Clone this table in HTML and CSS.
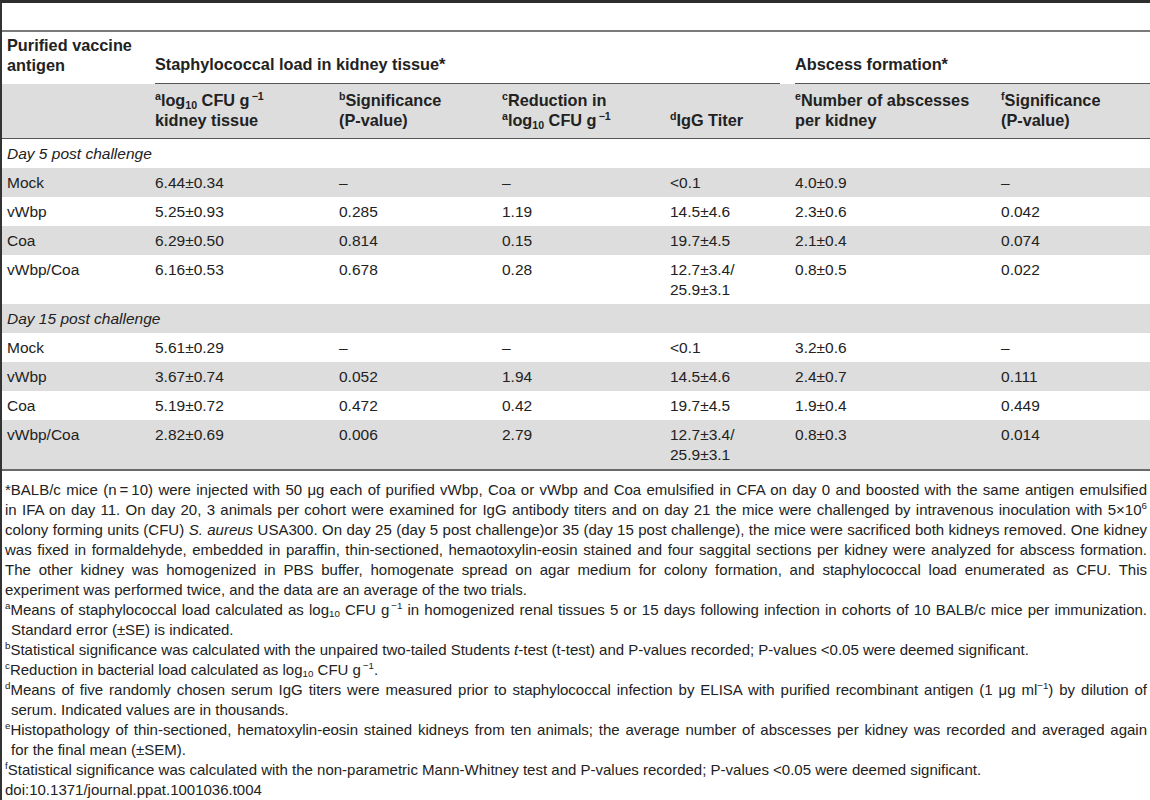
FILE: index.html
```html
<!DOCTYPE html>
<html lang="en">

<head>
    <meta charset="UTF-8">
    <meta name="viewport" content="width=device-width, initial-scale=1.0">
    <title>Table 4. Staphylococcal load and abscess formation</title>
    <link rel="stylesheet" href="styles.css">
</head>
<body>
    <div class="frame">
        <div class="caption-gap"></div>

        <table class="data-table">
            <colgroup>
                <col class="c1">
                <col class="c2">
                <col class="c3">
                <col class="c4">
                <col class="c5">
                <col class="c6">
                <col class="c7">
            </colgroup>
            <thead>
                <tr class="group-row">
                    <th class="antigen">Purified vaccine antigen</th>
                    <th colspan="4" class="group"><div class="group-title">Staphylococcal load in kidney tissue*</div></th>
                    <th colspan="2" class="group"><div class="group-title last">Abscess formation*</div></th>
                </tr>
                <tr class="col-row">
                    <th></th>
                    <th><sup>a</sup>log<sub>10</sub> CFU g<sup>&thinsp;−1</sup><br>kidney tissue</th>
                    <th><sup>b</sup>Significance<br>(P-value)</th>
                    <th><sup>c</sup>Reduction in<br><sup>a</sup>log<sub>10</sub> CFU g<sup>&thinsp;−1</sup></th>
                    <th><sup>d</sup>IgG Titer</th>
                    <th><sup>e</sup>Number of abscesses<br>per kidney</th>
                    <th><sup>f</sup>Significance<br>(P-value)</th>
                </tr>
            </thead>
            <tbody>
                <tr>
                    <td colspan="7" class="section">Day 5 post challenge</td>
                </tr>
                <tr>
                    <td>Mock</td>
                    <td>6.44±0.34</td>
                    <td>–</td>
                    <td>–</td>
                    <td>&lt;0.1</td>
                    <td>4.0±0.9</td>
                    <td>–</td>
                </tr>
                <tr>
                    <td>vWbp</td>
                    <td>5.25±0.93</td>
                    <td>0.285</td>
                    <td>1.19</td>
                    <td>14.5±4.6</td>
                    <td>2.3±0.6</td>
                    <td>0.042</td>
                </tr>
                <tr>
                    <td>Coa</td>
                    <td>6.29±0.50</td>
                    <td>0.814</td>
                    <td>0.15</td>
                    <td>19.7±4.5</td>
                    <td>2.1±0.4</td>
                    <td>0.074</td>
                </tr>
                <tr>
                    <td>vWbp/Coa</td>
                    <td>6.16±0.53</td>
                    <td>0.678</td>
                    <td>0.28</td>
                    <td>12.7±3.4/<br>25.9±3.1</td>
                    <td>0.8±0.5</td>
                    <td>0.022</td>
                </tr>
                <tr>
                    <td colspan="7" class="section">Day 15 post challenge</td>
                </tr>
                <tr>
                    <td>Mock</td>
                    <td>5.61±0.29</td>
                    <td>–</td>
                    <td>–</td>
                    <td>&lt;0.1</td>
                    <td>3.2±0.6</td>
                    <td>–</td>
                </tr>
                <tr>
                    <td>vWbp</td>
                    <td>3.67±0.74</td>
                    <td>0.052</td>
                    <td>1.94</td>
                    <td>14.5±4.6</td>
                    <td>2.4±0.7</td>
                    <td>0.111</td>
                </tr>
                <tr>
                    <td>Coa</td>
                    <td>5.19±0.72</td>
                    <td>0.472</td>
                    <td>0.42</td>
                    <td>19.7±4.5</td>
                    <td>1.9±0.4</td>
                    <td>0.449</td>
                </tr>
                <tr>
                    <td>vWbp/Coa</td>
                    <td>2.82±0.69</td>
                    <td>0.006</td>
                    <td>2.79</td>
                    <td>12.7±3.4/<br>25.9±3.1</td>
                    <td>0.8±0.3</td>
                    <td>0.014</td>
                </tr>
            </tbody>
        </table>

        <!-- footnotes keep the line breaks of the printed table -->
        <div class="notes">
            <p>
                <span class="ln">*BALB/c mice (n&thinsp;=&thinsp;10) were injected with 50 μg each of purified vWbp, Coa or vWbp and Coa emulsified in CFA on day 0 and boosted with the same antigen emulsified</span>
                <span class="ln">in IFA on day 11. On day 20, 3 animals per cohort were examined for IgG antibody titers and on day 21 the mice were challenged by intravenous inoculation with 5×10<sup>6</sup></span>
                <span class="ln">colony forming units (CFU) <i>S. aureus</i> USA300. On day 25 (day 5 post challenge)or 35 (day 15 post challenge), the mice were sacrificed both kidneys removed. One kidney</span>
                <span class="ln">was fixed in formaldehyde, embedded in paraffin, thin-sectioned, hemaotoxylin-eosin stained and four saggital sections per kidney were analyzed for abscess formation.</span>
                <span class="ln">The other kidney was homogenized in PBS buffer, homogenate spread on agar medium for colony formation, and staphylococcal load enumerated as CFU. This</span>
                <span class="ln">experiment was performed twice, and the data are an average of the two trials.</span>
            </p>
            <p class="fn">
                <span class="ln"><sup>a</sup>Means of staphylococcal load calculated as log<sub>10</sub> CFU g<sup>&thinsp;−1</sup> in homogenized renal tissues 5 or 15 days following infection in cohorts of 10 BALB/c mice per immunization.</span>
                <span class="ln">Standard error (±SE) is indicated.</span>
            </p>
            <p class="fn">
                <span class="ln"><sup>b</sup>Statistical significance was calculated with the unpaired two-tailed Students <i>t</i>-test (t-test) and P-values recorded; P-values &lt;0.05 were deemed significant.</span>
            </p>
            <p class="fn">
                <span class="ln"><sup>c</sup>Reduction in bacterial load calculated as log<sub>10</sub> CFU g<sup>&thinsp;−1</sup>.</span>
            </p>
            <p class="fn">
                <span class="ln"><sup>d</sup>Means of five randomly chosen serum IgG titers were measured prior to staphylococcal infection by ELISA with purified recombinant antigen (1 μg ml<sup>−1</sup>) by dilution of</span>
                <span class="ln">serum. Indicated values are in thousands.</span>
            </p>
            <p class="fn">
                <span class="ln"><sup>e</sup>Histopathology of thin-sectioned, hematoxylin-eosin stained kidneys from ten animals; the average number of abscesses per kidney was recorded and averaged again</span>
                <span class="ln">for the final mean (±SEM).</span>
            </p>
            <p class="fn">
                <span class="ln"><sup>f</sup>Statistical significance was calculated with the non-parametric Mann-Whitney test and P-values recorded; P-values &lt;0.05 were deemed significant.</span>
            </p>
            <p>
                <span class="ln">doi:10.1371/journal.ppat.1001036.t004</span>
            </p>
        </div>
    </div>
</body>

</html>
```

FILE: styles.css
```css
body {
    margin: 0;
    font-family: "Liberation Sans", Arial, sans-serif;
    font-size: 15.5px;
    color: #222;
    background: #fff;
}

.frame {
    border-top: 3px solid #2e2e2e;
    border-left: 2px solid #333;
    min-height: 797px;
}

.caption-gap {
    height: 27px;
    border-bottom: 2px solid #7a7a7a;
}

.data-table {
    width: 1148px;
    table-layout: fixed;
    border-collapse: collapse;
}

.c1 { width: 148px; }
.c2 { width: 184px; }
.c3 { width: 163px; }
.c4 { width: 168px; }
.c5 { width: 125px; }
.c6 { width: 206px; }
.c7 { width: 154px; }

th {
    font-weight: bold;
    font-size: 16.3px;
    text-align: left;
    vertical-align: bottom;
    line-height: 20px;
}

.group-row th {
    padding: 3px 5px 9px;
}

.group-row th.group {
    padding: 0;
}

.group-title {
    margin: 0 10px 0 5px;
    padding-bottom: 9px;
    border-bottom: 1px solid #555;
}

.group-title.last {
    margin-right: 0;
}

.col-row th {
    background-color: #dddddd;
    padding: 6px 5px 8px;
    border-bottom: 1px solid #555;
}

td {
    padding: 5px 5px 4px;
    line-height: 20px;
    vertical-align: top;
}

tbody tr:nth-child(even) {
    background-color: #dddddd;
}

tbody tr:last-child {
    border-bottom: 2px solid #6a6a6a;
}

td.section {
    font-style: italic;
}

sup, sub {
    font-size: 0.65em;
    line-height: 0;
}

sub {
    vertical-align: -0.25em;
}

.notes {
    padding: 9px 3px 0 3px;
    font-size: 15px;
    line-height: 20px;
}

.notes p {
    margin: 0;
}

/* every printed line is justified except the last one of a note */
.notes .ln {
    display: block;
    text-align: justify;
    text-align-last: justify;
}

.notes .ln:last-child {
    text-align-last: auto;
}

.notes p.fn {
    padding-left: 6px;
}

.notes p.fn .ln:first-child {
    margin-left: -6px;
}
```
